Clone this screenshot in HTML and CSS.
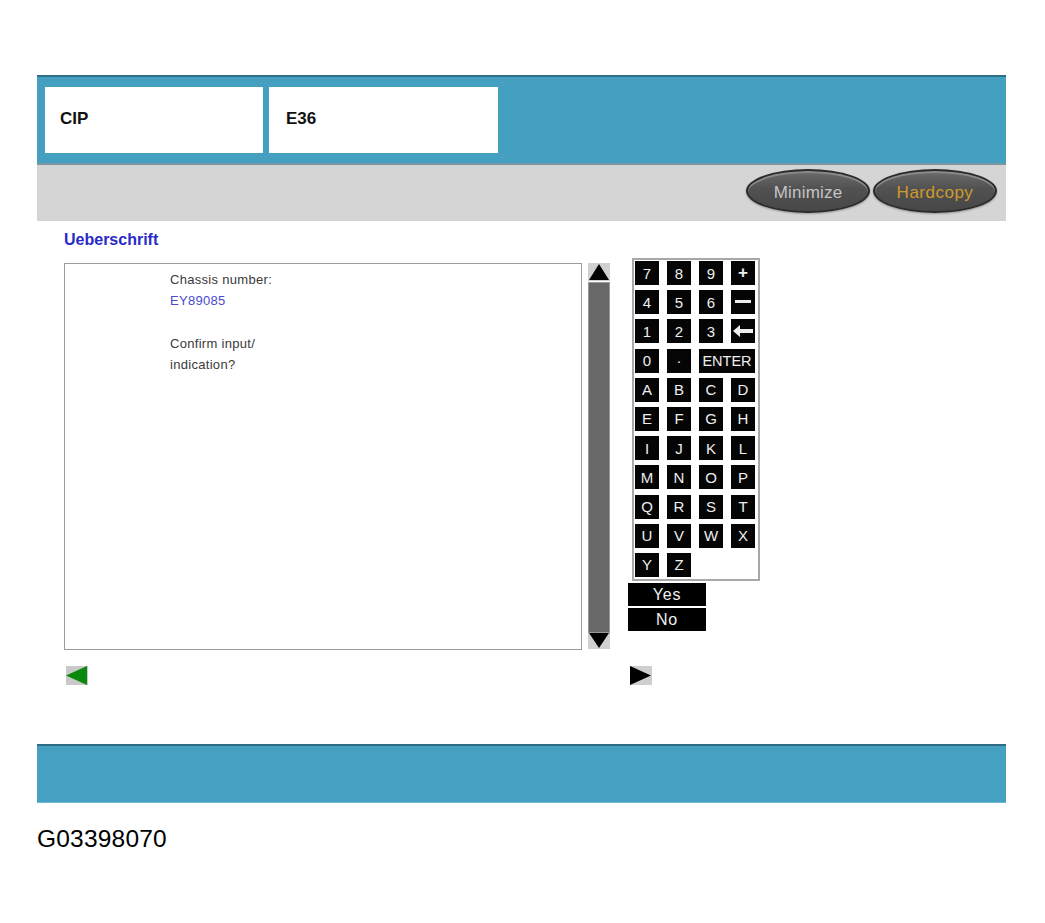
FILE: index.html
```html
<!DOCTYPE html>
<html>
<head>
<meta charset="utf-8">
<link rel="stylesheet" href="styles.css">
</head>
<body>
<div class="frame">
  <header class="top">
    <div class="tab tab1">CIP</div>
    <div class="tab tab2">E36</div>
  </header>
  <div class="toolbar">
    <div class="pill">Minimize</div>
    <div class="pill gold">Hardcopy</div>
  </div>
  <main class="content">
    <h1 class="title">Ueberschrift</h1>
    <div class="work">
      <div class="textbox">
        <p>Chassis number:</p>
        <p class="val">EY89085</p>
        <p>&nbsp;</p>
        <p>Confirm input/</p>
        <p>indication?</p>
      </div>
      <div class="scroll">
        <div class="sb-btn"><svg width="22" height="18" viewBox="0 0 22 18"><polygon points="11,1 21,17 1,17" fill="#000"/></svg></div>
        <div class="track"></div>
        <div class="sb-btn down"><svg width="22" height="16" viewBox="0 0 22 16"><polygon points="1,0 21,0 11,15" fill="#000"/></svg></div>
      </div>
      <div class="padcol">
        <div class="keypad">
          <div class="key">7</div><div class="key">8</div><div class="key">9</div><div class="key b">+</div>
          <div class="key">4</div><div class="key">5</div><div class="key">6</div><div class="key"><svg width="16" height="4" viewBox="0 0 16 4"><rect x="0" y="0" width="16" height="3" fill="#eee"/></svg></div>
          <div class="key">1</div><div class="key">2</div><div class="key">3</div><div class="key"><svg width="20" height="12" viewBox="0 0 20 12"><polygon points="0,6 7,0 7,4 20,4 20,8 7,8 7,12" fill="#eee"/></svg></div>
          <div class="key">0</div><div class="key">·</div><div class="key wide">ENTER</div>
          <div class="key">A</div><div class="key">B</div><div class="key">C</div><div class="key">D</div>
          <div class="key">E</div><div class="key">F</div><div class="key">G</div><div class="key">H</div>
          <div class="key">I</div><div class="key">J</div><div class="key">K</div><div class="key">L</div>
          <div class="key">M</div><div class="key">N</div><div class="key">O</div><div class="key">P</div>
          <div class="key">Q</div><div class="key">R</div><div class="key">S</div><div class="key">T</div>
          <div class="key">U</div><div class="key">V</div><div class="key">W</div><div class="key">X</div>
          <div class="key">Y</div><div class="key">Z</div>
        </div>
        <div class="yn first">Yes</div>
        <div class="yn">No</div>
      </div>
    </div>
    <div class="navrow">
      <span class="nav left"><svg width="22" height="19" viewBox="0 0 22 19"><rect width="22" height="19" fill="#c9c9c9"/><polygon points="0,9.5 21,0 21,19" fill="#0a8a0a"/></svg></span>
      <span class="nav right"><svg width="22" height="19" viewBox="0 0 22 19"><rect width="22" height="19" fill="#cfcfcf"/><polygon points="0,0 21,9.5 0,19" fill="#000"/></svg></span>
    </div>
  </main>
  <footer class="bottom"></footer>
</div>
<div class="code">G03398070</div>
</body>
</html>
```

FILE: styles.css
```css
* { box-sizing: border-box; }
html, body { margin: 0; padding: 0; background: #fff; }
body { font-family: "Liberation Sans", Arial, sans-serif; }

.frame {
  margin: 75px 0 0 37px;
  width: 969px;
}

.top {
  height: 90px;
  background: #449fc1;
  border-top: 2px solid #2e6f88;
  border-bottom: 2px solid #7d97a2;
  padding: 10px 0 0 8px;
  display: flex;
  gap: 6px;
  align-items: flex-start;
}
.tab {
  height: 66px;
  background: #fff;
  display: flex;
  align-items: center;
  font-weight: bold;
  font-size: 17px;
  color: #111;
  padding-bottom: 2px;
}
.tab1 { width: 218px; padding-left: 15px; }
.tab2 { width: 229px; padding-left: 17px; }

.toolbar {
  height: 56px;
  background: #d5d5d5;
  display: flex;
  justify-content: flex-end;
  align-items: flex-start;
  gap: 3px;
  padding: 4px 9px 0 0;
}
.pill {
  width: 124px;
  height: 44px;
  border-radius: 50%;
  background: linear-gradient(#6c6c6c, #515151 45%, #474747);
  border: 2px solid #2b2b2b;
  box-shadow: inset 0 2px 0 #8a8a8a, 0 1px 2px rgba(0,0,0,0.3);
  display: flex;
  align-items: center;
  justify-content: center;
  font-size: 17px;
  color: #c4c4c4;
  letter-spacing: 0.2px;
  padding-top: 3px;
}
.pill.gold { color: #cf9b2c; letter-spacing: 0.5px; }

.content {
  height: 523px;
  background: #fff;
  padding: 9px 0 0 27px;
}
.title {
  margin: 0 0 13px 0;
  font-size: 16px;
  line-height: 20px;
  font-weight: bold;
  color: #2a2ac6;
}
.work {
  display: flex;
  align-items: flex-start;
}
.textbox {
  width: 518px;
  height: 387px;
  border: 1px solid #9c9c9c;
  padding: 5px 0 0 105px;
  font-size: 13px;
  letter-spacing: 0.3px;
  color: #3a3a3a;
}
.textbox p { margin: 0; line-height: 21.3px; }
.textbox .val { color: #4a4ad0; }

.scroll {
  margin-left: 6px;
  width: 22px;
  height: 386px;
  display: flex;
  flex-direction: column;
}
.sb-btn {
  height: 18px;
  background: #d0d0d0;
  display: flex;
}
.sb-btn.down { height: 16px; }
.track {
  flex: 1;
  margin-top: 1px;
  background: #686868;
  border: 1px solid #9a9a9a;
}

.padcol {
  margin-left: 18px;
  margin-top: -5px;
  display: flex;
  flex-direction: column;
}
.keypad {
  margin-left: 4px;
  width: 128px;
  height: 323px;
  border: 2px solid #a8a8a8;
  padding: 1px 0 0 1px;
  display: grid;
  grid-template-columns: repeat(4, 24px);
  grid-auto-rows: 24px;
  column-gap: 8px;
  row-gap: 5.2px;
}
.key {
  background: #050505;
  color: #eeeeee;
  font-size: 15px;
  display: flex;
  align-items: center;
  justify-content: center;
}
.key.b { font-weight: bold; font-size: 17px; }
.key.wide { grid-column: span 2; letter-spacing: 0; font-size: 14.5px; }

.yn {
  width: 78px;
  height: 23px;
  background: #000;
  color: #f0f0f0;
  font-size: 16px;
  letter-spacing: 0.8px;
  display: flex;
  align-items: center;
  justify-content: center;
  margin-top: 2px;
}

.navrow {
  margin-top: 16px;
  display: flex;
  align-items: flex-start;
  padding-left: 2px;
}
.nav { display: flex; }
.nav.right { margin-left: 542px; }

.bottom {
  height: 59px;
  background: #46a0c2;
  border-top: 2px solid #2f6c84;
  border-bottom: 1px solid #6cbad6;
}

.code {
  margin: 22px 0 0 37px;
  font-size: 24.5px;
  letter-spacing: 0.2px;
  color: #000;
}
```
